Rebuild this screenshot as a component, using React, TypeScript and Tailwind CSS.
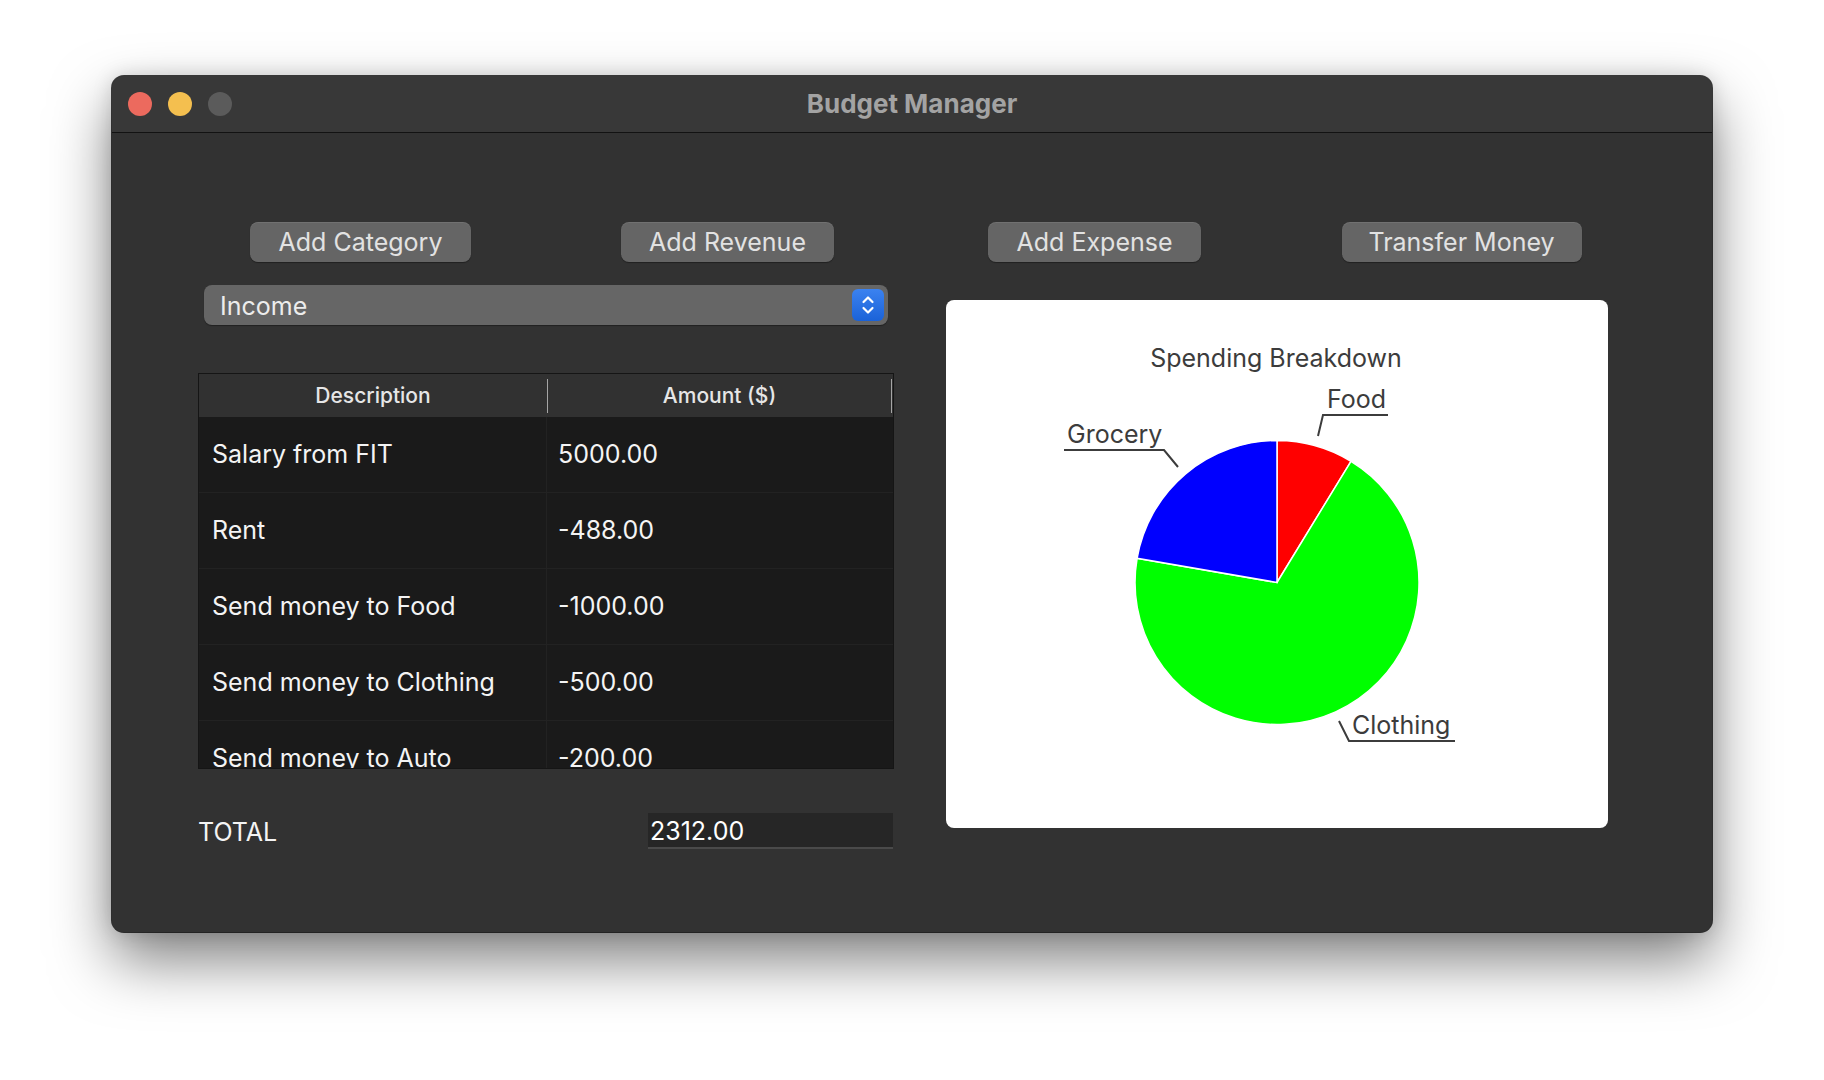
import React from "react";

const FONT = { fontFamily: "Inter, 'Noto Sans', sans-serif" };

const ROWS = [
  { desc: "Salary from FIT", amount: "5000.00" },
  { desc: "Rent", amount: "-488.00" },
  { desc: "Send money to Food", amount: "-1000.00" },
  { desc: "Send money to Clothing", amount: "-500.00" },
  { desc: "Send money to Auto", amount: "-200.00" },
];

function MacButton({ label, width }: { label: string; width: string }) {
  return (
    <button
      className={[
        "h-[40px] rounded-[8px] bg-[#656565] text-[#e2e2e2] text-[25px] leading-none",
        "shadow-[0_1px_1px_rgba(0,0,0,0.35),inset_0_1px_0_rgba(255,255,255,0.08)]",
        width,
      ].join(" ")}
    >
      {label}
    </button>
  );
}

function PieChart() {
  // panel-relative coords, slices measured clockwise from 12 o'clock
  const ink = "#3c3c3c";
  return (
    <svg width="662" height="528" viewBox="0 0 662 528">
      <text x="330" y="67" textAnchor="middle" fontSize="25" fill={ink} style={FONT}>
        Spending Breakdown
      </text>

      <path d="M331,282.5 L331,140.5 A142,142 0 0 1 405,161.3 Z" fill="#ff0000" stroke="#fff" strokeWidth="1.5" />
      <path d="M331,282.5 L405,161.3 A142,142 0 1 1 191.1,258.3 Z" fill="#00ff00" stroke="#fff" strokeWidth="1.5" />
      <path d="M331,282.5 L191.1,258.3 A142,142 0 0 1 331,140.5 Z" fill="#0000ff" stroke="#fff" strokeWidth="1.5" />

      {/* Food */}
      <text x="381" y="108" fontSize="25" fill={ink} style={FONT}>Food</text>
      <polyline points="372,136 377,115 442,115" fill="none" stroke={ink} strokeWidth="2" />

      {/* Grocery */}
      <text x="121" y="143" fontSize="25" fill={ink} style={FONT}>Grocery</text>
      <polyline points="118,150 218,150 232,167" fill="none" stroke={ink} strokeWidth="2" />

      {/* Clothing */}
      <text x="406" y="434" fontSize="25" fill={ink} style={FONT}>Clothing</text>
      <polyline points="393,421 403,441 509,441" fill="none" stroke={ink} strokeWidth="2" />
    </svg>
  );
}

export default function App() {
  return (
    <div className="min-h-screen w-full bg-white flex justify-center pt-[76px]" style={FONT}>
      <div className="w-[1600px] h-[856px] rounded-[12px] overflow-hidden bg-[#323232] flex flex-col shadow-[0_0_0_1px_rgba(0,0,0,0.75),0_28px_60px_rgba(0,0,0,0.5),0_0_20px_rgba(0,0,0,0.15)]">
        {/* Title bar */}
        <div className="h-[57px] shrink-0 bg-[#383838] border-b border-[#121212] grid grid-cols-[1fr_auto_1fr] items-center">
          <div className="flex items-center gap-4 pl-4">
            <span className="w-6 h-6 rounded-full bg-[#ec6a5e]" />
            <span className="w-6 h-6 rounded-full bg-[#f4bf4f]" />
            <span className="w-6 h-6 rounded-full bg-[#5b5b5b]" />
          </div>
          <div className="text-[26px] font-bold text-[#a3a3a3] -mt-[2px]">Budget Manager</div>
          <div />
        </div>

        {/* Content */}
        <div className="flex-1 flex flex-col pt-[89px]">
          <div className="grid grid-cols-4 pl-[65px] pr-[67px] justify-items-center">
            <MacButton label="Add Category" width="w-[221px]" />
            <MacButton label="Add Revenue" width="w-[213px]" />
            <MacButton label="Add Expense" width="w-[213px]" />
            <MacButton label="Transfer Money" width="w-[240px]" />
          </div>

          <div className="flex items-start pl-[86px] gap-[52px]">
            {/* Left column */}
            <div className="w-[696px] flex flex-col pt-[23px]">
              <div className="mx-[6px] h-[40px] rounded-[8px] bg-[#666666] flex items-center justify-between pl-[16px] pr-[4px] shadow-[0_1px_1px_rgba(0,0,0,0.35)]">
                <span className="text-[25px] text-[#ececec] pt-[3px]">Income</span>
                <span className="w-[32px] h-[32px] rounded-[6px] bg-gradient-to-b from-[#3b82f0] to-[#1a62d8] flex items-center justify-center">
                  <svg width="14" height="22" viewBox="0 0 14 22" fill="none" stroke="#fff" strokeWidth="2.2" strokeLinecap="round" strokeLinejoin="round">
                    <polyline points="2.5,8 7,3.5 11.5,8" />
                    <polyline points="2.5,14 7,18.5 11.5,14" />
                  </svg>
                </span>
              </div>

              {/* Table */}
              <div className="mt-[48px] h-[396px] border border-[#151515] flex flex-col overflow-hidden bg-[#1a1a1a]">
                <div className="h-[43px] shrink-0 bg-[#313131] grid grid-cols-[348px_1px_343px_1px_1fr] items-center text-[21px] font-medium text-[#e6e6e6]">
                  <div className="text-center">Description</div>
                  <div className="h-[34px] bg-[#a5a5a5]" />
                  <div className="text-center">Amount ($)</div>
                  <div className="h-[34px] bg-[#a5a5a5]" />
                  <div />
                </div>
                <div className="flex-1 overflow-hidden">
                  {ROWS.map((r) => (
                    <div key={r.desc} className="h-[76px] flex border-b border-[#222222] text-[25px] text-[#f4f4f4]">
                      <div className="w-[348px] border-r border-[#222222] flex items-center pl-[13px]">{r.desc}</div>
                      <div className="flex-1 flex items-center pl-[11px]">{r.amount}</div>
                    </div>
                  ))}
                </div>
              </div>

              {/* Total */}
              <div className="mt-[44px] h-[36px] flex items-center justify-between">
                <span className="text-[25px] text-[#f4f4f4] pt-[3px]">TOTAL</span>
                <div className="w-[245px] h-[36px] mr-px bg-[#262626] border-b-2 border-[#4a4a4a] flex items-center pl-[2px] pt-[3px] text-[25px] text-white">
                  2312.00
                </div>
              </div>
            </div>

            {/* Right column: chart */}
            <div className="mt-[38px] w-[662px] h-[528px] rounded-[8px] bg-white overflow-hidden">
              <PieChart />
            </div>
          </div>
        </div>
      </div>
    </div>
  );
}
